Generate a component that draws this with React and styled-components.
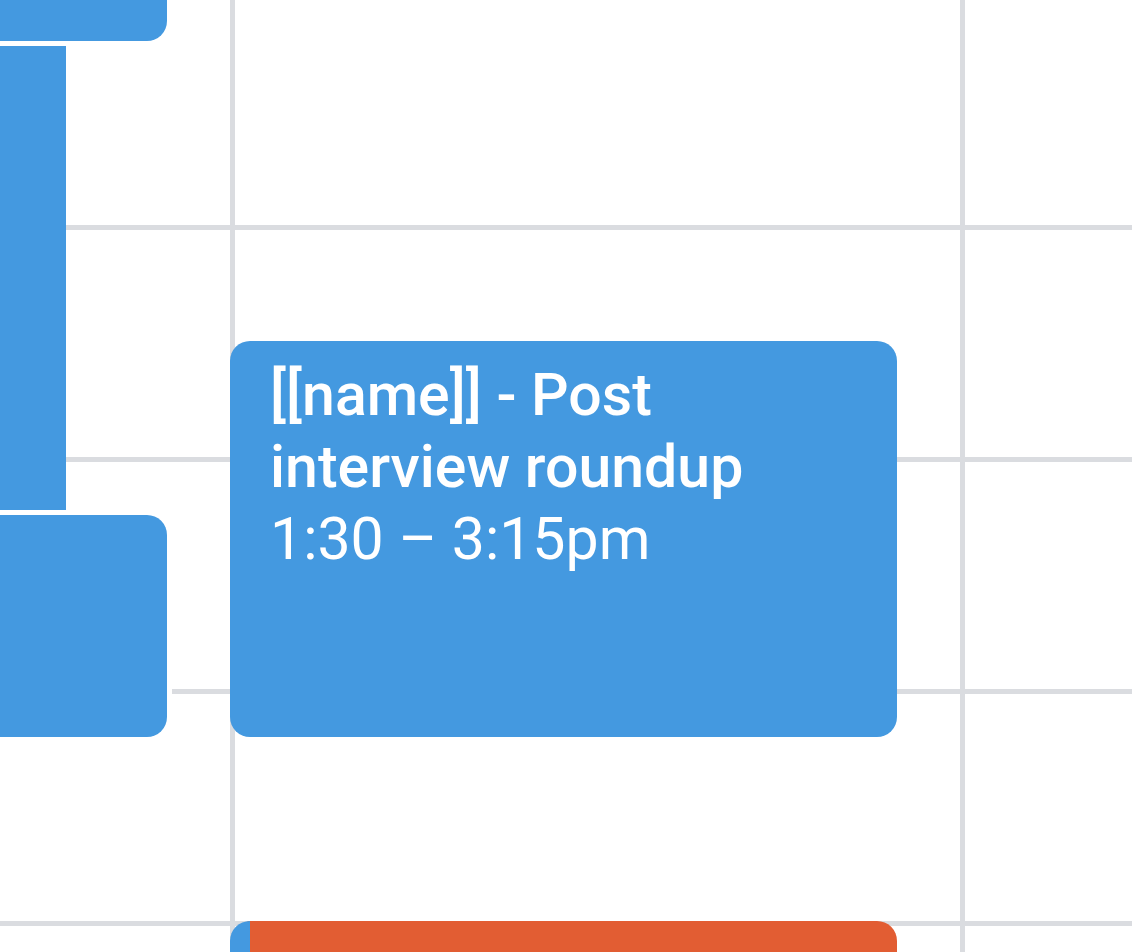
import React from "react";
import styled, { createGlobalStyle } from "styled-components";

const colors = {
  line: "#dadce0",
  blue: "#4499e0",
  orange: "#e25d33",
};

const GlobalStyle = createGlobalStyle`
  *, *::before, *::after { box-sizing: border-box; }
  body {
    margin: 0;
    background: #fff;
    font-family: Roboto, "Liberation Sans", sans-serif;
  }
`;

const Calendar = styled.main`
  display: grid;
  min-height: 100vh;
  overflow: hidden;
`;

const HourRows = styled.div`
  grid-area: 1 / 1;
  display: flex;
  flex-direction: column;
`;

const HourRow = styled.div`
  height: ${({ $partial }) => ($partial ? 230 : 232)}px;
  border-bottom: 5px solid ${colors.line};
`;

const Days = styled.div`
  grid-area: 1 / 1;
  display: grid;
  grid-template-columns: 230fr 730fr 172fr;
`;

const Day = styled.section`
  display: flex;
  flex-direction: column;
  min-width: 0;
  padding-top: ${({ $start = 0 }) => $start}px;
  gap: ${({ $gap = 0 }) => $gap}px;
  box-shadow: ${({ $divided }) =>
    $divided ? `inset 5px 0 ${colors.line}` : "none"};
`;

const Event = styled.article`
  flex: ${({ $height }) => ($height ? `0 0 ${$height}px` : "1 0 31px")};
  margin-right: ${({ $inset = 63 }) => $inset}px;
  border-radius: ${({ $radius = "20px" }) => $radius};
  background: ${({ $color = colors.blue }) => $color};
  box-shadow: ${({ $outlined }) => ($outlined ? "0 0 0 5px #fff" : "none")};
  color: #fff;
`;

const StripedEvent = styled(Event)`
  border-left: 20px solid ${colors.blue};
  border-radius: 20px 20px 0 0;
`;

const EventText = styled.div`
  padding: 18px 40px 0;
  font-size: 59px;
  line-height: 72px;
`;

const Title = styled.h2`
  margin: 0;
  font-size: inherit;
  font-weight: 500;
`;

const Time = styled.p`
  margin: 0;
`;

export default function App() {
  return (
    <>
      <GlobalStyle />
      <Calendar>
        <HourRows>
          <HourRow $partial />
          <HourRow />
          <HourRow />
          <HourRow />
        </HourRows>
        <Days>
          <Day $gap={5}>
            <Event $height={41} $radius="0 0 20px 0" $outlined />
            <Event $height={464} $inset={164} $radius="0" />
            <Event $height={222} $radius="0 20px 20px 0" $outlined />
          </Day>
          <Day $start={341} $gap={184} $divided>
            <Event $height={396}>
              <EventText>
                <Title>[[name]] - Post interview roundup</Title>
                <Time>1:30 – 3:15pm</Time>
              </EventText>
            </Event>
            <StripedEvent $color={colors.orange} />
          </Day>
          <Day $divided />
        </Days>
      </Calendar>
    </>
  );
}
